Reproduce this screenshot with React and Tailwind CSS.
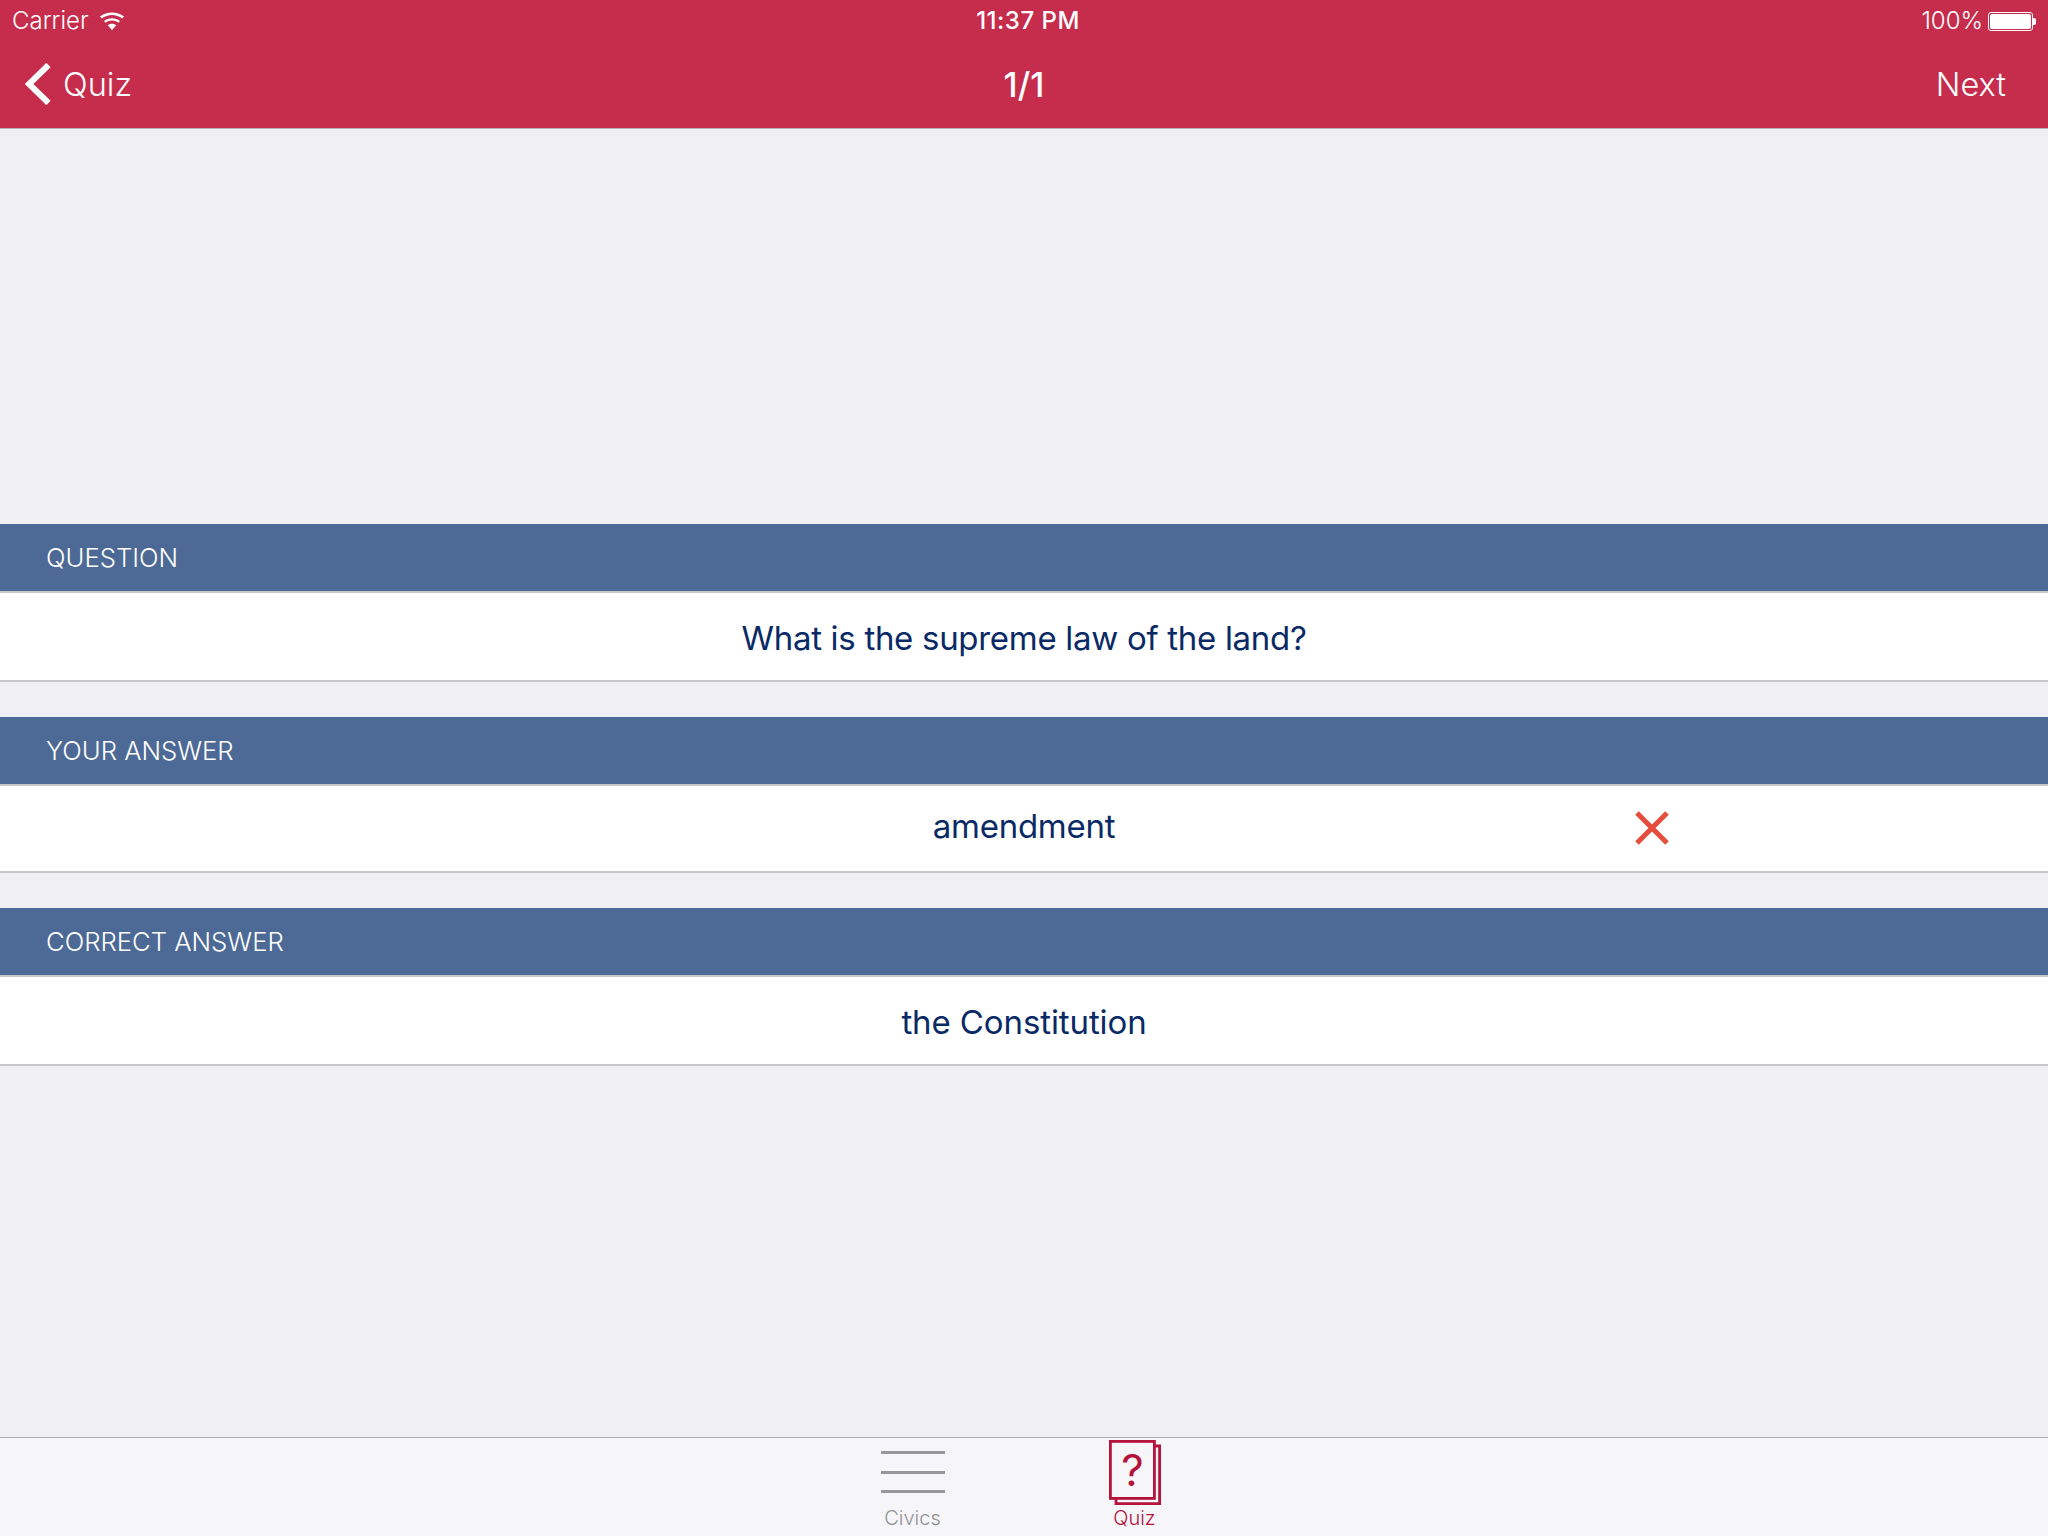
import React from "react";

const font = { fontFamily: "Inter, 'Noto Sans', sans-serif" };

const Section = ({ title, answer, wrong, top, row }) => (
    <section className={top}>
        <div className="h-[67px] bg-[#4d6a96] flex items-center pl-[46px] pt-[2px] text-[25.7px] text-white font-light">{title}</div>
        <div className="h-[2px] bg-[#c8c7cc]"></div>
        <div className={row}>
            {answer}
            {wrong && (
                <svg className="absolute left-[1634px] top-[24px]" width="36" height="36" viewBox="0 0 36 36">
                    <path d="M3 3 L33 33 M33 3 L3 33" stroke="#e74c3c" strokeWidth="5" />
                </svg>
            )}
        </div>
    </section>
);

export default function App() {
    return (
        <div style={font} className="w-[2048px] h-[1536px] flex flex-col bg-[#efeff4] overflow-hidden">
            {/* Status + nav bar */}
            <header className="h-[129px] bg-[#c62d4d] border-b border-[#b3b1b8] text-white shrink-0 flex flex-col">
                <div className="h-[42px] px-3 grid grid-cols-3 items-center text-[24px] font-light">
                    <div className="flex items-center gap-[10px]">
                        <span>Carrier</span>
                        <svg width="26" height="20" viewBox="0 0 26 20" fill="white">
                            <path d="M13 19 L8.8 14.2 C11.2 12.2 14.8 12.2 17.2 14.2 Z" />
                            <path d="M6.6 11.8 L5 10 C9.6 6.2 16.4 6.2 21 10 L19.4 11.8 C15.6 8.8 10.4 8.8 6.6 11.8 Z" />
                            <path d="M2.8 7.6 L1 5.6 C7.8 0 18.2 0 25 5.6 L23.2 7.6 C17.4 2.9 8.6 2.9 2.8 7.6 Z" />
                        </svg>
                    </div>
                    <span className="font-medium text-center tracking-[0.5px] pl-[8px]">11:37 PM</span>
                    <div className="flex items-center justify-end gap-[5px]">
                        <span>100%</span>
                        <div className="flex items-center">
                            <div className="w-[45px] h-[19px] rounded-[3px] border border-white p-[1px]">
                                <div className="w-full h-full rounded-[2px] bg-white"></div>
                            </div>
                            <div className="w-[3px] h-[7px] bg-white rounded-r-[2px]"></div>
                        </div>
                    </div>
                </div>
                <nav className="flex-1 grid grid-cols-3 items-center pl-[25px] pr-[42px] pb-[1px] text-[32.5px] font-light">
                    <div className="flex items-center gap-[12px]">
                        <svg className="mb-[2px]" width="26" height="42" viewBox="0 0 26 42" fill="none">
                            <path d="M23.5 2 L4 21 L23.5 40" stroke="white" strokeWidth="6" />
                        </svg>
                        <span className="pt-[2px]">Quiz</span>
                    </div>
                    <span className="font-medium text-center text-[34px] pl-[17px]">1/1</span>
                    <span className="text-right pt-[2px]">Next</span>
                </nav>
            </header>

            <main className="flex-1">
                <Section
                    top="mt-[395px]"
                    title="QUESTION"
                    answer="What is the supreme law of the land?"
                    row="h-[89px] bg-white flex items-center justify-center pt-[5px] text-[33px] tracking-[-0.3px] text-[#0a2a66] border-b-2 border-[#c8c7cc]"
                />
                <Section
                    top="mt-[35px]"
                    title="YOUR ANSWER"
                    answer="amendment"
                    wrong
                    row="relative h-[87px] bg-white flex items-center justify-center pb-[3px] text-[33px] tracking-[-0.25px] text-[#0a2a66] border-b-2 border-[#c8c7cc]"
                />
                <Section
                    top="mt-[35px]"
                    title="CORRECT ANSWER"
                    answer="the Constitution"
                    row="h-[89px] bg-white flex items-center justify-center pt-[4px] text-[33px] tracking-[-0.1px] text-[#0a2a66] border-b-2 border-[#c8c7cc]"
                />
            </main>

            {/* Tab bar */}
            <footer className="h-[99px] bg-[#f6f6f9] border-t border-[#aeaeb2] shrink-0 flex justify-center gap-[122px] pr-[1px]">
                <div className="w-[100px] flex flex-col items-center text-[#929292]">
                    <div className="w-[64px] h-[42px] mt-[13px] flex flex-col justify-between">
                        <div className="h-[3px] bg-[#979797]"></div>
                        <div className="h-[3px] bg-[#979797]"></div>
                        <div className="h-[3px] bg-[#979797]"></div>
                    </div>
                    <span className="mt-[10px] text-[20px] font-light">Civics</span>
                </div>
                <div className="w-[100px] flex flex-col items-center text-[#b5123c]">
                    <svg className="mt-[2px]" width="52" height="65" viewBox="0 0 52 65" fill="none" stroke="#b5123c" strokeWidth="2.8">
                        <rect x="1.4" y="1.4" width="44" height="57" />
                        <path d="M46 6 H50.6 V63.6 H7 V59" />
                        <text x="23.5" y="46" textAnchor="middle" fontSize="44" fontWeight="400" fill="#b5123c" stroke="none" fontFamily="Inter">?</text>
                    </svg>
                    <span className="-mt-[2px] text-[20px] font-light">Quiz</span>
                </div>
            </footer>
        </div>
    );
}
